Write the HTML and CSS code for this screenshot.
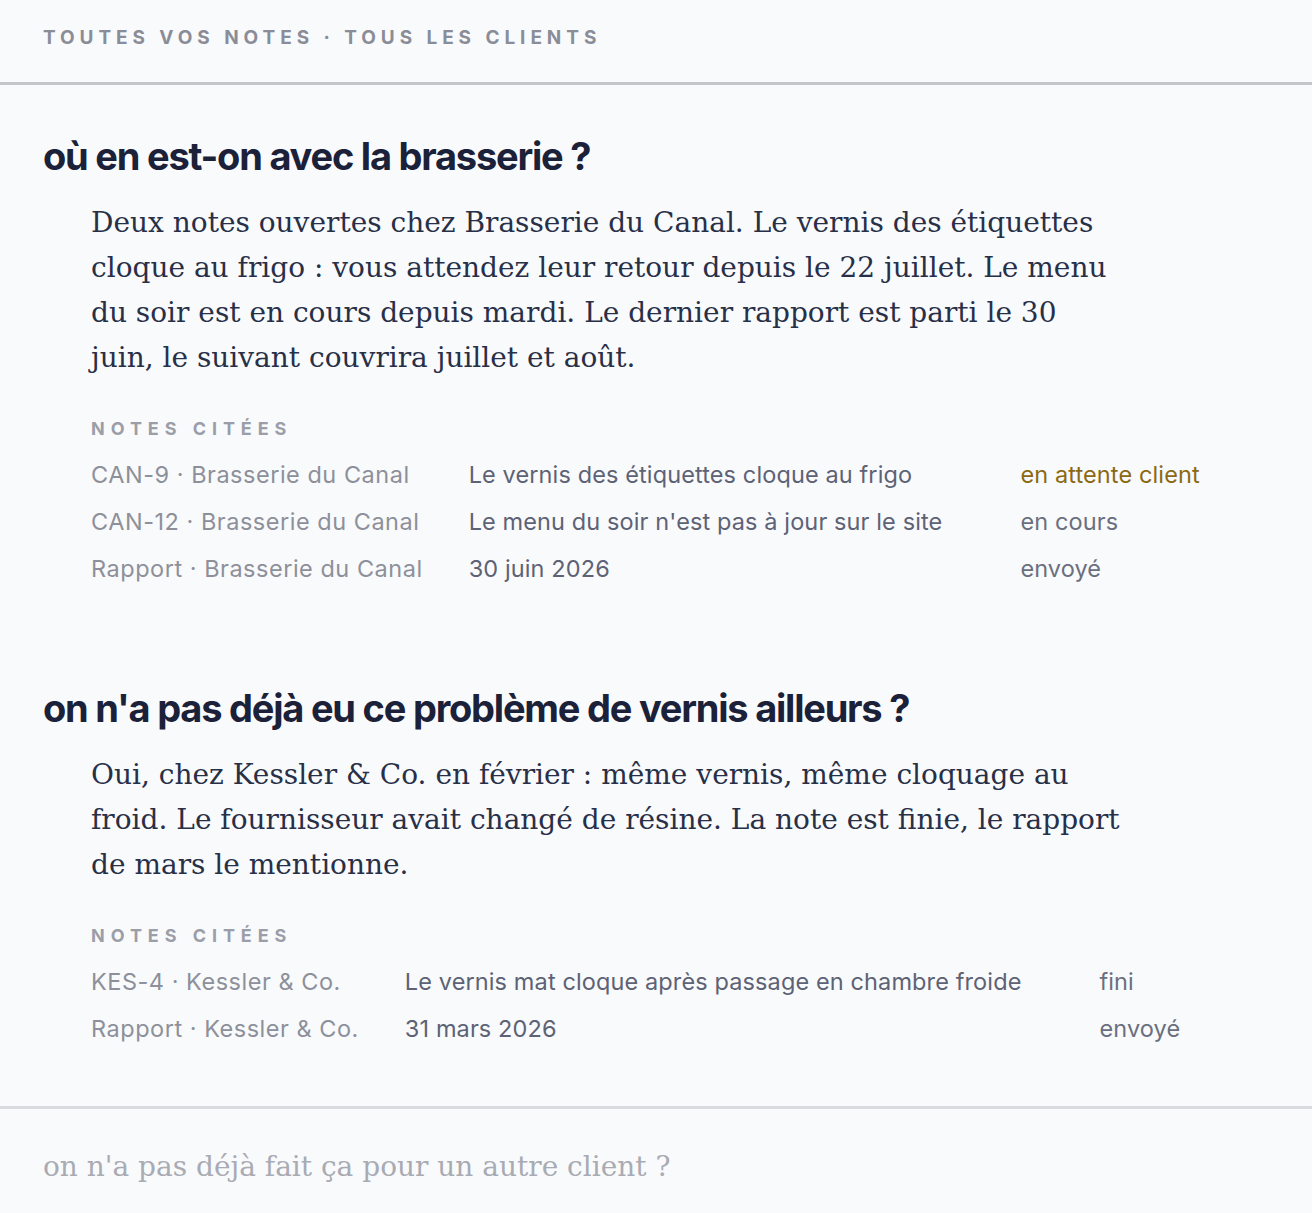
FILE: index.html
```html
<!DOCTYPE html>
<html lang="fr">
<head>
<meta charset="utf-8">
<title>Toutes vos notes</title>
<link rel="stylesheet" href="styles.css">
</head>
<body>
<div class="page">
  <header class="top">
    <div class="eyebrow">Toutes vos notes · tous les clients</div>
  </header>
  <main class="thread">
    <section class="qa">
      <h2 class="question">où en est-on avec la brasserie ?</h2>
      <div class="answer">
        <p class="reply">Deux notes ouvertes chez Brasserie du Canal. Le vernis des étiquettes cloque au frigo : vous attendez leur retour depuis le 22 juillet. Le menu du soir est en cours depuis mardi. Le dernier rapport est parti le 30 juin, le suivant couvrira juillet et août.</p>
        <div class="cited-label">Notes citées</div>
        <div class="cited">
          <div class="ref">CAN-9 · Brasserie du Canal</div>
          <div class="title">Le vernis des étiquettes cloque au frigo</div>
          <div class="status waiting">en attente client</div>
          <div class="ref">CAN-12 · Brasserie du Canal</div>
          <div class="title">Le menu du soir n'est pas à jour sur le site</div>
          <div class="status">en cours</div>
          <div class="ref">Rapport · Brasserie du Canal</div>
          <div class="title">30 juin 2026</div>
          <div class="status">envoyé</div>
        </div>
      </div>
    </section>
    <section class="qa">
      <h2 class="question">on n'a pas déjà eu ce problème de vernis ailleurs ?</h2>
      <div class="answer">
        <p class="reply">Oui, chez Kessler &amp; Co. en février : même vernis, même cloquage au froid. Le fournisseur avait changé de résine. La note est finie, le rapport de mars le mentionne.</p>
        <div class="cited-label">Notes citées</div>
        <div class="cited">
          <div class="ref">KES-4 · Kessler &amp; Co.</div>
          <div class="title">Le vernis mat cloque après passage en chambre froide</div>
          <div class="status">fini</div>
          <div class="ref">Rapport · Kessler &amp; Co.</div>
          <div class="title">31 mars 2026</div>
          <div class="status">envoyé</div>
        </div>
      </div>
    </section>
  </main>
  <footer class="composer">
    <input class="ask" type="text" placeholder="on n'a pas déjà fait ça pour un autre client ?">
  </footer>
</div>
</body>
</html>
```

FILE: styles.css
```css
html, body {
  margin: 0;
  padding: 0;
  background: #f9fafc;
}

.page {
  min-height: 1213px;
  display: flex;
  flex-direction: column;
  font-family: "Inter", "Liberation Sans", sans-serif;
}

.top {
  padding: 29px 43px 35px;
  border-bottom: 3px solid #c4c5c9;
}

.eyebrow {
  font-size: 19px;
  line-height: 18px;
  font-weight: 700;
  letter-spacing: 0.26em;
  text-transform: uppercase;
  color: #8a8d97;
}

.thread {
  padding: 51px 43px 0;
  display: flex;
  flex-direction: column;
  gap: 96px;
}

.question {
  margin: 0;
  font-size: 38px;
  line-height: 41px;
  font-weight: 700;
  letter-spacing: -0.032em;
  color: #1b2139;
}

.answer {
  padding-left: 48px;
}

.reply {
  margin: 23px 0 0;
  max-width: 1032px;
  font-family: "DejaVu Serif", serif;
  font-size: 28px;
  line-height: 45px;
  color: #283048;
  text-wrap: pretty;
}

.cited-label {
  margin-top: 40px;
  font-size: 18px;
  line-height: 18px;
  font-weight: 700;
  letter-spacing: 0.33em;
  text-transform: uppercase;
  color: #9b9ea8;
}

.cited {
  margin-top: 13px;
  display: grid;
  grid-template-columns: max-content max-content max-content;
  column-gap: 46px;
  font-size: 23.5px;
  line-height: 47px;
  letter-spacing: 0.005em;
}

.ref {
  color: #8d909a;
  letter-spacing: 0.022em;
}

.title {
  color: #5d6275;
}

.status {
  padding-left: 32px;
  color: #6a6f7f;
}

.status.waiting {
  color: #8b6914;
}

.composer {
  margin-top: 54px;
  border-top: 3px solid #dadbdf;
  padding: 35px 43px 26px;
}

.ask {
  display: block;
  width: 100%;
  box-sizing: border-box;
  border: 0;
  outline: 0;
  padding: 0;
  background: transparent;
  font-family: "DejaVu Serif", serif;
  font-size: 28px;
  line-height: 45px;
  height: 45px;
  color: #283048;
}

.ask::placeholder {
  color: #a9abb3;
}
```
